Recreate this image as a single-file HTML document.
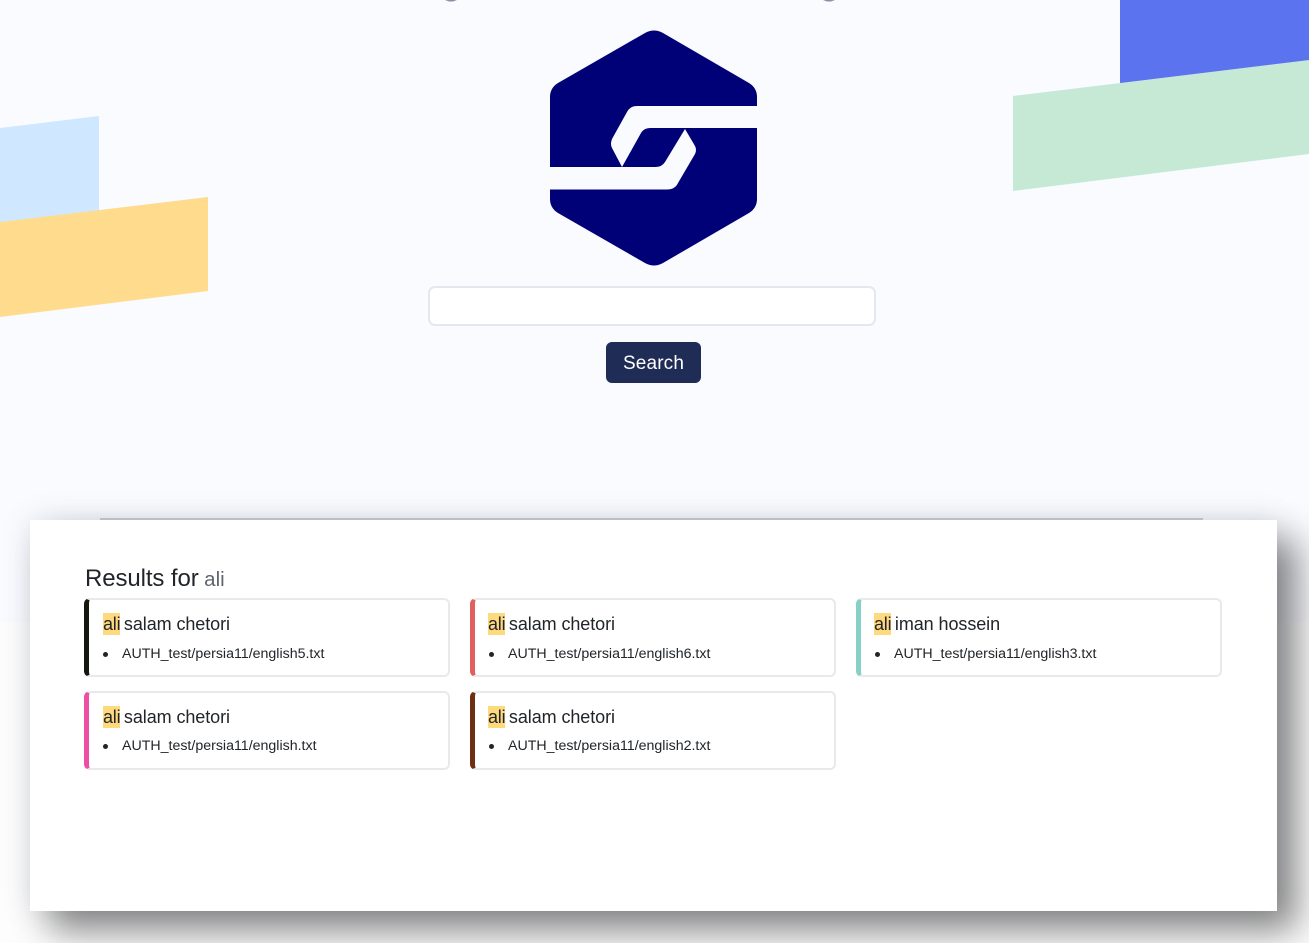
<!DOCTYPE html>
<html><head><meta charset="utf-8"><style>
html,body{margin:0;padding:0;width:1309px;height:943px;overflow:hidden;background:#fdfdfd;font-family:"Liberation Sans",sans-serif;color:#212529}
.bg{position:absolute;left:0;top:0;width:1309px;height:622px;background:#fafbff}
svg{position:absolute;left:0;top:0}
.inp{position:absolute;left:428px;top:286px;width:444px;height:36px;background:#fff;border:2px solid #e4e7f0;border-radius:7px}
.btn{position:absolute;left:606px;top:342px;width:95px;height:41px;background:#1f2d56;border-radius:6px;color:#fff;font-size:19px;line-height:44px;text-align:center;letter-spacing:.15px}
.line{position:absolute;left:100px;top:518px;width:1103px;height:2px;background:#cdd2dc}
.panel{position:absolute;left:30px;top:520px;width:1247px;height:391px;background:#fff;box-shadow:20px 20px 34px rgba(0,0,0,.46),0 0 30px rgba(60,70,110,.12)}
.h{position:absolute;left:85px;top:564.500px;font-size:24px;line-height:28px;white-space:nowrap;letter-spacing:-.1px}
.h span{color:#5f656c;font-size:20.5px;letter-spacing:0;margin-left:-1px}
.c{position:absolute;width:359px;height:75px;background:#fff;border:2px solid #e8e9eb;border-left:5px solid #000;border-radius:6px;box-sizing:content-box}
.t{position:absolute;left:14px;top:12px;font-size:18px;line-height:24px;white-space:nowrap;color:#212529;letter-spacing:-.08px}
.t2{left:13px}
.t mark{background:#ffd97d;color:#212529;padding:0;display:inline-block;width:17px;height:22px;line-height:22px;text-align:left;letter-spacing:-.2px;margin-right:-1px}
.p{position:absolute;left:33px;top:45px;font-size:14.2px;line-height:18px;white-space:nowrap}
.p:before{content:"";position:absolute;left:-19px;top:7px;width:5px;height:5px;border-radius:50%;background:#212529}
</style></head><body>
<div class="bg"></div>
<svg width="1309" height="943" viewBox="0 0 1309 943">
<polygon points="1120,0 1309,0 1309,70 1120,90" fill="#5b73ee"/>
<polygon points="1013,96 1309,60 1309,154 1013,191" fill="#c6e9d6"/>
<polygon points="0,128 99,116 99,230 0,240" fill="#cfe8ff"/>
<polygon points="0,222 208,197 208,291 0,317" fill="#ffdb8d"/>
<path d="M645 33Q654 28 663 33L749 83Q757 88 757 97V106H637Q630 106 627 112L612 139Q610 144 612 148L622 167L641 133Q644 128 650 128H757V199Q757 208 749 213L663 263Q654 268 645 263L558 213Q550 208 550 199V189.500H667Q675 189.500 678 183L695 154Q697 150 695 146L685 129L665 162Q662 167 655 167H550V97Q550 88 558 83Z" fill="#000077"/>
<path d="M445 0H457L453 1.500H449Z" fill="#8a8fa5"/>
<path d="M823 0H835L831 1.500H827Z" fill="#8a8fa5"/>
</svg>
<div class="inp"></div>
<div class="btn">Search</div>
<div class="line"></div>
<div class="panel"></div>
<div class="h">Results for <span>ali</span></div>
<div class="c" style="left:84px;top:598px;border-left-color:#14170d"><div class="t"><mark>ali</mark> salam chetori</div><div class="p">AUTH_test/persia11/english5.txt</div></div>
<div class="c" style="left:470px;top:598px;border-left-color:#e0605f"><div class="t t2"><mark>ali</mark> salam chetori</div><div class="p">AUTH_test/persia11/english6.txt</div></div>
<div class="c" style="left:856px;top:598px;border-left-color:#86d0c6"><div class="t t2"><mark>ali</mark> iman hossein</div><div class="p">AUTH_test/persia11/english3.txt</div></div>
<div class="c" style="left:84px;top:691px;border-left-color:#ee4fa5"><div class="t"><mark>ali</mark> salam chetori</div><div class="p" style="top:44px">AUTH_test/persia11/english.txt</div></div>
<div class="c" style="left:470px;top:691px;border-left-color:#6f2f13"><div class="t t2"><mark>ali</mark> salam chetori</div><div class="p" style="top:44px">AUTH_test/persia11/english2.txt</div></div>
</body></html>
